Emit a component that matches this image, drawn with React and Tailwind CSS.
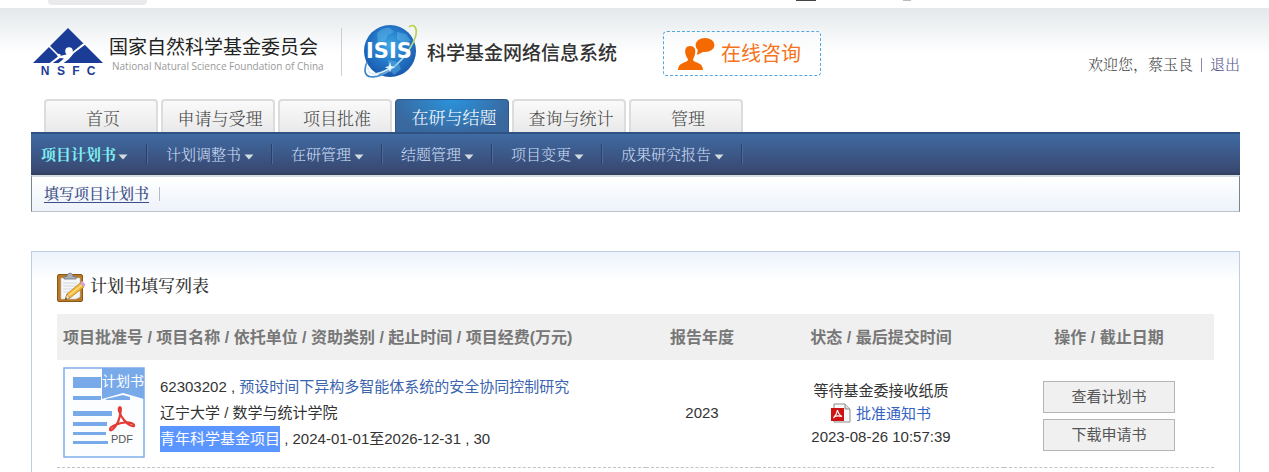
import React from "react";

const SONG =
  "font-['Liberation_Serif','Noto_Serif_CJK_SC','Noto_Sans_CJK_SC',serif]";

const TABS = ["首页", "申请与受理", "项目批准", "在研与结题", "查询与统计", "管理"];
const MENU = ["项目计划书", "计划调整书", "在研管理", "结题管理", "项目变更", "成果研究报告"];

function NsfcMark() {
  return (
    <svg width="70" height="52" viewBox="0 0 70 52" role="img" aria-label="NSFC">
      <path d="M35 0 L70 35 H0 Z" fill="#1b3c96" />
      <path d="M16 18 L25.500 27.500" stroke="#fff" strokeWidth="1.600" />
      <circle cx="26" cy="27.500" r="1.700" fill="#fff" />
      <circle cx="36" cy="23" r="3.800" fill="#fff" />
      <path d="M53 16 L41 25 L36 31 L30 35.500 H25 L31 30.500 L27 30 L19 35.500 H16 L25 28.500 L33 26.500 L40 23.500 L50 15.500 Z" fill="#fff" />
      <g fill="#1b3c96" fontFamily="Liberation Sans, sans-serif" fontWeight="bold" fontSize="12" textAnchor="middle">
        <text x="12" y="47">N</text>
        <text x="28" y="47">S</text>
        <text x="43" y="47">F</text>
        <text x="58" y="47">C</text>
      </g>
    </svg>
  );
}

function IsisMark() {
  return (
    <svg width="56" height="56" viewBox="0 0 56 56" role="img" aria-label="ISIS">
      <defs>
        <radialGradient id="globe" cx="0.5" cy="0.4" r="0.6">
          <stop offset="0" stopColor="#3fa9e6" />
          <stop offset="0.6" stopColor="#2274c4" />
          <stop offset="1" stopColor="#1a58ac" />
        </radialGradient>
        <linearGradient id="orbit" x1="0" y1="1" x2="1" y2="0">
          <stop offset="0" stopColor="#2f7cc4" />
          <stop offset="0.5" stopColor="#a8d8f0" />
          <stop offset="1" stopColor="#b5d334" />
        </linearGradient>
      </defs>
      <circle cx="27" cy="27" r="26" fill="url(#globe)" />
      <path d="M14 9 q6-6 13-5 l4 4 -6 3 -3 6 -7 1z M34 8 l9 2 5 7 -8 2 -6-4z M25 36 l10 2 3 7 -7 6 -5-6z" fill="#6cc6ef" opacity="0.4" />
      <path d="M4 38 C-4 57 14 56 28 45 C45 33 57 10 52 3 C51 1 48 1 46 3" stroke="url(#orbit)" strokeWidth="1.700" fill="none" />
      <path d="M5 43 C4 53 16 51 27 44" stroke="#d8effa" strokeWidth="1.500" fill="none" />
      <path d="M27 38 l1.200 4 4 1.200 -4 1.200 -1.200 4 -1.200-4 -4-1.200 4-1.200z" fill="#e4f6ff" />
      <text x="26" y="34" textAnchor="middle" fill="#fff" fontFamily="DejaVu Sans, sans-serif" fontWeight="bold" fontSize="21">ISIS</text>
    </svg>
  );
}

function ConsultIcon() {
  return (
    <svg width="37" height="34" viewBox="0 0 37 34" aria-hidden="true">
      <ellipse cx="27" cy="8" rx="9.500" ry="7" fill="#f56a00" />
      <path d="M20 11 L19 18 L27 14 Z" fill="#f56a00" />
      <path d="M12 9 C17 9 18 13 17 17 C16.500 20 15 21 15 23 C16 26 25 25 25 33 L0 33 C0 25 9 26 10 23 C10 21 8 20 7.500 17 C6.500 12 8 9 12 9 Z" fill="#f56a00" />
    </svg>
  );
}

function ClipboardIcon() {
  return (
    <svg width="29" height="31" viewBox="0 0 29 31" aria-hidden="true">
      <rect x="0.500" y="2.500" width="25" height="27" rx="1.500" fill="#b87a26" stroke="#8d5713" />
      <path d="M4 6 H23 V25 L19 27 H4 Z" fill="#f4f6f7" stroke="#c3c8cc" strokeWidth="0.600" />
      <path d="M6 11 H20 M6 14 H20 M6 17 H18 M6 20 H14" stroke="#d5dade" />
      <path d="M7 7 V4.500 H10 C10 0 16 0 16 4.500 H19 V7 Z" fill="#aab0b5" stroke="#70767b" strokeWidth="0.800" />
      <path d="M8 28 L10 22 L23 11 L27 15 L13 26 Z" fill="#f4b93a" stroke="#b27a16" strokeWidth="0.700" />
      <path d="M11 24 L25 13" stroke="#fde08c" strokeWidth="1.300" />
      <path d="M23 11 L25.500 9 L28.500 12.500 L27 15 Z" fill="#d9a3e0" />
      <path d="M8 28 L10 22 L13 26 Z" fill="#f3dcb4" stroke="#8a6a30" strokeWidth="0.500" />
      <path d="M8 28 L9 25.500 L10 27 Z" fill="#333" />
    </svg>
  );
}

function PlanDocIcon() {
  return (
    <svg width="82" height="92" viewBox="0 0 82 92" className="shrink-0" role="img" aria-label="计划书 PDF">
      <rect x="1" y="1" width="80" height="89" fill="#fcfdff" stroke="#7fadea" strokeWidth="1.500" />
      <path d="M39 1 H81 V32 L60 26 L39 32 Z" fill="#78aaea" />
      <g fill="#78aaea">
        <rect x="10" y="10" width="28" height="11" />
        <path d="M10 29 H38 V33 H10 Z M43 32 L60 28 L67 30 V33 H43 Z" />
        <rect x="10" y="44" width="39" height="5" />
        <rect x="10" y="55" width="34" height="4" />
        <rect x="10" y="65" width="33" height="3" />
        <rect x="10" y="74" width="35" height="3" />
      </g>
      <text x="39" y="19" fill="#fff" fontSize="14" fontFamily="Noto Sans CJK SC, sans-serif">计划书</text>
      <path
        d="M57 40 C54 41 57 48 61 53 C64 57 69 60 71 59 C72 57 67 55 62 55.500 C56 56 48 59 47 62 C47 66 52 61 55 55 C57 50 59 40 57 40 Z"
        fill="none"
        stroke="#e33a36"
        strokeWidth="2.200"
        strokeLinejoin="round"
      />
      <text x="48" y="76" fill="#555" fontSize="11" fontFamily="Liberation Sans, sans-serif">PDF</text>
    </svg>
  );
}

function SmallPdfIcon() {
  return (
    <svg width="20" height="20" viewBox="0 0 20 20" className="shrink-0" aria-hidden="true">
      <path d="M3 1 H14 L19 6 V19 H3 Z" fill="#fafafa" stroke="#8b8b8b" />
      <path d="M14 1 V6 H19" fill="#ddd" stroke="#8b8b8b" />
      <rect x="0" y="5" width="13" height="13" fill="#cc1414" />
      <path d="M6.500 7 C6 10 4.500 13 2.500 15 M6.500 7 C7 10 8.500 12 11 13.500 M3.500 13.500 C6 12.500 8 12.500 11 13.500" fill="none" stroke="#fff" strokeWidth="1.200" />
    </svg>
  );
}

function Caret() {
  return (
    <svg width="10" height="6" viewBox="0 0 10 6" className="mt-1" aria-hidden="true">
      <path d="M0.500 0.500 H9.500 L5 5.500 Z" fill="#d3dde0" />
    </svg>
  );
}

export default function App() {
  return (
    <div className="overflow-hidden bg-white font-['Liberation_Sans','Noto_Sans_CJK_SC',sans-serif] text-[15px] text-[#333]">
      <div className="flex h-2 items-start pl-12">
        <div className="h-[5px] w-[99px] rounded-b bg-[#eaeaed]" />
        <div className="ml-[649px] h-px w-5 bg-[#444]" />
        <div className="ml-[87px] h-px w-2 bg-[#bbb]" />
      </div>

      <header className="bg-linear-to-b from-[#e4e8eb] to-white to-50% pt-4 pr-[29px] pl-[33px]">
        <div className="flex h-[75px] items-start">
          <div className="flex pt-1">
            <NsfcMark />
            <div className="ml-1.5 w-[213px] whitespace-nowrap">
              <div className="pt-1 font-['Noto_Sans_CJK_SC',sans-serif] text-[19px] leading-7 text-[#222]">
                国家自然科学基金委员会
              </div>
              <div className="pl-[3px] font-['Open_Sans',sans-serif] text-[10px] leading-3 text-[#999]">
                National Natural Science Foundation of China
              </div>
            </div>
          </div>
          <div className="mt-1 ml-[19px] h-12 w-px bg-[#ccd0d4]" />
          <div className="ml-[21px]">
            <IsisMark />
          </div>
          <div className="ml-2 w-[194px] pt-4 font-['Noto_Sans_CJK_SC',sans-serif] text-[19px] leading-6 font-medium whitespace-nowrap text-[#333]">
            科学基金网络信息系统
          </div>
          <a
            href="#consult"
            className="mt-[7px] ml-[42px] flex h-[45px] w-[158px] items-center gap-[6px] rounded-[4px] border border-dashed border-[#54a6e0] bg-white/40 pl-3.5 text-[20px] whitespace-nowrap text-[#f5731c]"
          >
            <ConsultIcon />
            在线咨询
          </a>
          <div className={`${SONG} ml-auto flex items-center pt-[31px] leading-5 font-light text-[#444]`}>
            <span>欢迎您，蔡玉良</span>
            <span className="mx-2 h-3.5 w-px bg-[#8a8aa8]" />
            <a href="#logout" className="text-[#55558a]">
              退出
            </a>
          </div>
        </div>
      </header>

      <main className="pr-[29px] pl-[31px]">
        <nav className={SONG}>
          <div className="flex gap-[3px] pl-[13px]">
            {TABS.map((t) => (
              <a
                key={t}
                href="#tab"
                className={
                  t === "在研与结题"
                    ? "flex h-[33px] w-[114px] items-center justify-center rounded-t border border-b-0 border-[#31568a] bg-[radial-gradient(ellipse_at_top,#2a93dc,#39689f_75%)] pt-1.5 pl-1 text-[17px] font-light text-white"
                    : "flex h-[33px] w-[114px] items-center justify-center rounded-t border-2 border-b-0 border-[#dcdcdc] bg-linear-to-b from-[#fafafa] to-[#e9e9e9] pt-1.5 pl-1 text-[17px] font-light text-[#444]"
                }
              >
                {t}
              </a>
            ))}
          </div>
          <div className="flex h-[43px] items-center border-t-2 border-b-2 border-t-[#2f5283] border-b-[#33415f] bg-linear-to-b from-[#3f6ba3] to-[#38476f] pl-2.5">
            {MENU.map((m, i) => (
              <div key={m} className="flex items-center">
                <a
                  href="#menu"
                  className={
                    i === 0
                      ? "flex items-center gap-0.5 pt-0.5 pr-[18px] leading-6 font-bold text-[#7eeef2]"
                      : "flex items-center gap-[3px] pt-0.5 pr-[17px] pl-[18px] leading-6 font-light text-[#cbdcf3]"
                  }
                >
                  {m}
                  <Caret />
                </a>
                <span className="h-5 w-0.5 border-l border-[#2c4168] bg-[#4c6b9c]" />
              </div>
            ))}
          </div>
          <div className="flex h-[37px] items-center border border-t-2 border-[#b9c3ce] border-t-[#d6dce6] border-r-[#75878d] border-l-[#75878d] bg-linear-to-b from-white to-[#edf2fa] pl-3">
            <a href="#plan" className="leading-6 font-medium text-[#3b4e86] underline underline-offset-3">
              填写项目计划书
            </a>
            <span className="ml-2.5 h-3.5 w-px bg-[#b5bcc4]" />
          </div>
        </nav>

        <section className="mt-[39px] border border-b-0 border-[#bccde4] bg-linear-to-b from-[#edf3fb] to-white to-[28px] px-[25px] pb-1">
          <h1 className={`${SONG} flex h-[62px] items-center gap-1 pt-2 text-[17px] font-medium text-[#333]`}>
            <ClipboardIcon />
            计划书填写列表
          </h1>
          <table className="w-full table-fixed border-collapse">
            <colgroup>
              <col />
              <col className="w-[112px]" />
              <col className="w-[246px]" />
              <col className="w-[210px]" />
            </colgroup>
            <thead className="bg-[#f0f0f0] text-[16px] text-[#777]">
              <tr className="h-[46px]">
                <th className="pt-0.5 pl-1.5 text-left font-bold whitespace-nowrap">
                  项目批准号 / 项目名称 / 依托单位 / 资助类别 / 起止时间 / 项目经费(万元)
                </th>
                <th className="pt-0.5">报告年度</th>
                <th className="pt-0.5">状态 / 最后提交时间</th>
                <th className="pt-0.5">操作 / 截止日期</th>
              </tr>
            </thead>
            <tbody>
              <tr className="h-[107px] border-b border-dashed border-[#c4c4c4]">
                <td className="pl-1.5">
                  <div className="flex items-center gap-[15px]">
                    <PlanDocIcon />
                    <div className="leading-[26px] whitespace-nowrap">
                      <div>
                        62303202 ,{" "}
                        <a href="#project" className="text-[#3a64ad]">
                          预设时间下异构多智能体系统的安全协同控制研究
                        </a>
                      </div>
                      <div>辽宁大学 / 数学与统计学院</div>
                      <div>
                        <span className="inline-block bg-[#5b95ff] text-white">青年科学基金项目</span> , 2024-01-01至2026-12-31 , 30
                      </div>
                    </div>
                  </div>
                </td>
                <td className="text-center">2023</td>
                <td className="text-center leading-[23px]">
                  <div>等待基金委接收纸质</div>
                  <a href="#notice" className="flex items-center justify-center gap-[5px] text-[#3563c4]">
                    <SmallPdfIcon />
                    批准通知书
                  </a>
                  <div>2023-08-26 10:57:39</div>
                </td>
                <td>
                  <div className="flex flex-col items-center gap-1.5 pt-1.5">
                    <button type="button" className="h-8 w-[132px] border border-[#b4b4b4] bg-[#f0f0f0] text-[#555]">
                      查看计划书
                    </button>
                    <button type="button" className="h-8 w-[132px] border border-[#b4b4b4] bg-[#f0f0f0] text-[#555]">
                      下载申请书
                    </button>
                  </div>
                </td>
              </tr>
            </tbody>
          </table>
        </section>
      </main>
    </div>
  );
}
